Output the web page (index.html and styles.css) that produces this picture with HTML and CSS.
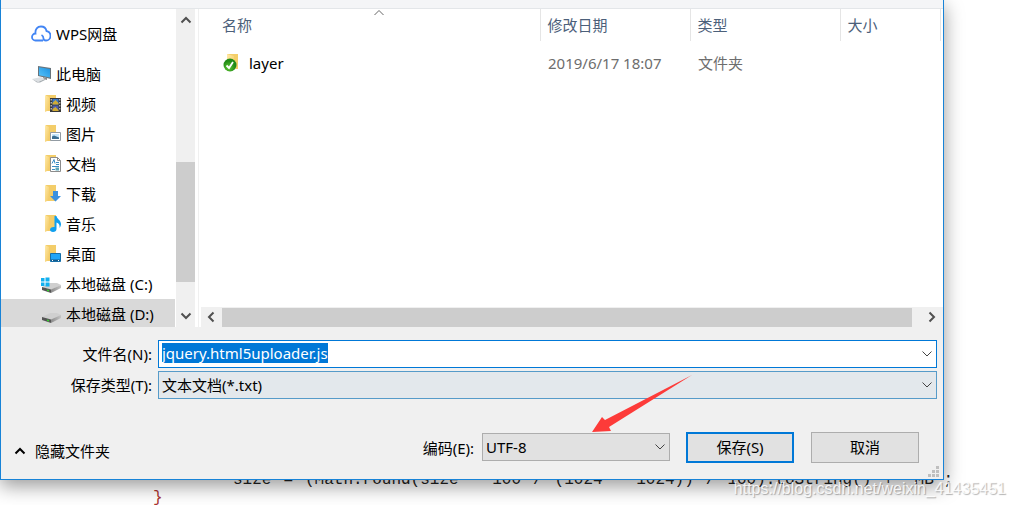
FILE: index.html
```
<!DOCTYPE html>
<html lang="zh-CN">
<head>
<meta charset="utf-8">
<title>另存为</title>
<link rel="stylesheet" href="styles.css">
</head>
<body>
<svg class="defs" aria-hidden="true">
  <defs>
    <linearGradient id="fold" x1="0" x2="1" y1="0" y2="1"><stop offset="0" stop-color="#ffeaa8"/><stop offset="1" stop-color="#f2c75f"/></linearGradient>
    <linearGradient id="metal" x1="0" x2="1"><stop offset="0" stop-color="#8b8b8b"/><stop offset="1" stop-color="#c4c4c4"/></linearGradient>
    <linearGradient id="screen" x1="0" x2="1" y1="1" y2="0"><stop offset="0" stop-color="#58c4fa"/><stop offset="1" stop-color="#1d91e0"/></linearGradient>
    <radialGradient id="ok" cx=".4" cy=".7"><stop offset="0" stop-color="#62c935"/><stop offset="1" stop-color="#218b16"/></radialGradient>
    <symbol id="folder" viewBox="0 0 20 20">
      <path d="M5 1h10v16H5z" fill="#f3cd69"/>
      <path d="M4 1l4 2v13l-4 2z" fill="url(#fold)"/>
    </symbol>
    <symbol id="drive" viewBox="0 0 20 20">
      <path d="M1 13l8-4h7l4 2-10 5z" fill="#cfcfcf"/>
      <path d="M10 15.500l10-4.500v3L10 19z" fill="url(#metal)"/>
      <path d="M1 13l9 2.500V19l-9-3z" fill="#555"/>
      <path d="M6 15.500l2 .5v1.500L6 17z" fill="#35d12f"/>
    </symbol>
    <symbol id="chevron" viewBox="0 0 12 8"><path d="M1.500 1.500L6 6l4.500-4.500" fill="none" stroke="currentColor"/></symbol>
    <symbol id="arrow" viewBox="0 0 12 8"><path d="M1.500 6.500L6 2l4.500 4.500" fill="none" stroke="currentColor" stroke-width="2"/></symbol>
  </defs>
</svg>
<main class="desktop">
  <form class="dialog" onsubmit="return false">
    <div class="toolbar"></div>
    <div class="panes">
      <nav class="tree">
        <a class="node root" href="#"><svg class="icon" viewBox="0 0 20 20"><path d="M12 16.500H4.500a3.500 3.500 0 0 1 0-7C4 5 6.500 2.500 10 2.500c3 0 5 2 5.500 4.500 2.500.5 4 2.500 4 4.700 0 2.800-2.200 4.800-4.500 4.800-2 0-2.500-1-2.500-2 0-1.200 0-2.500-2-3.500" fill="none" stroke="#4285f4" stroke-width="1.800"/></svg>WPS网盘</a>
        <a class="node root gap" href="#"><svg class="icon" viewBox="0 0 20 20"><path d="M7 2l13 2v11L7 12z" fill="#68737b"/><path d="M8 3.200l11 1.700v8.600L8 11.200z" fill="url(#screen)"/><path d="M12 13l4 1v2l-4-1z" fill="#888"/><path d="M1 15l9-2 4 2-7 3z" fill="#dce0e3"/><path d="M1 15l6 3 7-3v1l-5 2.500H6z" fill="#a3aaaf"/></svg>此电脑</a>
        <a class="node" href="#"><svg class="icon" viewBox="0 0 20 20"><use href="#folder"/><path d="M9 4h11v14H9z" fill="#383838"/><path d="M11.500 5h6v5.500h-6z" fill="#3a78c8"/><path d="M11.500 11.500h6V17h-6z" fill="#4c5fae"/><path d="M11.500 9l3-3 3 3v1.500h-6zM11.500 15l3-2 3 3v1h-6z" fill="#d2ac35"/><path d="M10.200 5v12M18.800 5v12" stroke="#e8e8e8" stroke-dasharray="1.500 1.500"/></svg>视频</a>
        <a class="node" href="#"><svg class="icon" viewBox="0 0 20 20"><use href="#folder"/><path d="M9.500 8.500h10v8h-10z" fill="#fff" stroke="#929ba3"/><path d="M11 10h7v5h-7z" fill="#c5e5fa"/><path d="M11 12.500l2-1 5 2V15h-7z" fill="#3b6e92"/></svg>图片</a>
        <a class="node" href="#"><svg class="icon" viewBox="0 0 20 20"><use href="#folder"/><path d="M9.500 3.500h7l3 3v11h-10z" fill="#fff" stroke="#8c8c8c"/><path d="M16.500 3.500v3h3" fill="none" stroke="#8c8c8c"/><path d="M11 9.500l2-4 1 4M15 8.500h3M15 10.500h3M11 12.500h7M11 15.500h3" fill="none" stroke="#3b8cc4"/><path d="M14.500 13.500H18v3h-3.500z" fill="#5ba4b6"/></svg>文档</a>
        <a class="node" href="#"><svg class="icon" viewBox="0 0 20 20"><use href="#folder"/><path d="M12 7h5v5h3l-5.500 5.500L9 12h3z" fill="#3b91df"/></svg>下载</a>
        <a class="node" href="#"><svg class="icon" viewBox="0 0 20 20"><use href="#folder"/><path d="M13.500 2h2c.3 3 4.500 4 4.500 8 0 1.500-.5 2.500-1.500 4 .5-3-.5-4.500-3-5.500V15c0 2-1.500 3-3.500 3s-3-1-3-2.500 2-3 4.500-2.500z" fill="#10a0ef"/></svg>音乐</a>
        <a class="node" href="#"><svg class="icon" viewBox="0 0 20 20"><use href="#folder"/><path d="M9.500 9.500h10v8h-10z" fill="#20a5f8" stroke="#176fa9"/><path d="M10 15.500h9v1.500h-9z" fill="#145b8c"/><path d="M11 16.500h1M17 16.500h1" stroke="#fff"/></svg>桌面</a>
        <a class="node" href="#"><svg class="icon" viewBox="0 0 20 20"><use href="#drive"/><path d="M0 4h3.500v3.500H0zM4.500 3.500h4v4h-4zM0 8.500h3.500V12H0zM4.500 8.500h4v4h-4z" fill="#12b0ef"/></svg>本地磁盘 (C:)</a>
        <a class="node current" href="#"><svg class="icon" viewBox="0 0 20 20"><use href="#drive"/></svg>本地磁盘 (D:)</a>
      </nav>
      <div class="vbar">
        <svg class="tip"><use href="#arrow"/></svg>
        <div class="vthumb"></div>
        <svg class="tip down"><use href="#arrow"/></svg>
      </div>
      <section class="list">
        <table class="files">
          <thead>
            <tr><th class="name">名称<svg class="sort"><path d="M1.500 6L6 1.500 10.500 6" fill="none" stroke="currentColor"/></svg></th><th class="wide">修改日期</th><th class="wide">类型</th><th class="size">大小</th><th class="end"></th></tr>
          </thead>
          <tbody>
            <tr><td class="name"><div class="entry"><svg class="icon" viewBox="0 0 20 20"><path d="M5 1h11v15H5z" fill="#f4ce68"/><path d="M5 1l7 2v13l-7 2z" fill="url(#fold)"/><circle cx="8" cy="12" r="6.500" fill="url(#ok)"/><path d="M4.500 12.500l2.500 2.500 4-6" fill="none" stroke="#fff" stroke-width="1.800"/></svg>layer</div></td><td>2019/6/17 18:07</td><td>文件夹</td><td></td><td></td></tr>
          </tbody>
        </table>
        <div class="hbar">
          <svg class="tip left"><use href="#arrow"/></svg>
          <div class="hthumb"></div>
          <svg class="tip right"><use href="#arrow"/></svg>
        </div>
      </section>
    </div>
    <div class="fields">
      <label for="filename">文件名(N):</label>
      <div class="combo"><input class="box filename" id="filename" type="text" value="jquery.html5uploader.js" spellcheck="false" autocomplete="off"><svg class="chevron"><use href="#chevron"/></svg></div>
      <label for="filetype">保存类型(T):</label>
      <div class="combo"><select class="box filetype" id="filetype"><option>文本文档(*.txt)</option></select><svg class="chevron"><use href="#chevron"/></svg></div>
    </div>
    <div class="footer">
      <button class="toggle" type="button"><svg class="tip"><use href="#arrow"/></svg>隐藏文件夹</button>
      <label class="enc-label" for="encoding">编码(E):</label>
      <div class="combo enc"><select class="box encoding" id="encoding"><option>UTF-8</option></select><svg class="chevron"><use href="#chevron"/></svg></div>
      <button class="button primary" type="submit">保存(S)</button>
      <button class="button" type="button">取消</button>
    </div>
    <svg class="grip" viewBox="0 0 12 12"><path d="M8 0h3v3H8zM4 4h3v3H4zM8 4h3v3H8zM0 8h3v3H0zM4 8h3v3H4zM8 8h3v3H8z" fill="#bfbfbf"/></svg>
    <svg class="pointer" viewBox="0 0 100 57"><path d="M0 57L10 42l3 3L100 0 17 52l2 4z" fill="#fd3b39"/></svg>
  </form>
  <div class="editor">
    <div class="code">size = (Math.round(size * 100 / (1024 * 1024)) / 100).toString() + 'MB';</div>
    <div class="brace">}</div>
  </div>
  <div class="watermark">https://blog.csdn.net/weixin_41435451</div>
</main>
<script src="main.js"></script>
</body>
</html>
```
FILE: styles.css
```
* { box-sizing: border-box; }
body {
  margin: 0;
  background: #fff;
  color: #000;
  font: 15px/20px "Noto Sans", "Noto Sans CJK SC", sans-serif;
  overflow: hidden;
}
input, select, button { font: inherit; color: inherit; }
svg { display: block; flex: none; }
.defs { position: absolute; width: 0; height: 0; }
.desktop { position: relative; min-height: 100vh; overflow: hidden; }

.dialog {
  position: relative;
  z-index: 1;
  margin-right: 70px;
  background: #f0f0f0;
  border: 1px solid #1883d7;
  border-top: 0;
  box-shadow: 0 6px 18px rgba(0, 0, 0, .4);
}
.toolbar { height: 9px; background: #f4f5f7; border-bottom: 1px solid #e3e6e9; }

.panes { display: flex; height: 318px; background: #fff; }
.tree { width: 175px; padding: 10px 1px 0 0; overflow: hidden; }
.node {
  display: flex;
  align-items: center;
  gap: 5px;
  height: 30px;
  padding-left: 40px;
  color: #000;
  text-decoration: none;
  white-space: nowrap;
}
.node.root { padding-left: 30px; }
.node.gap { margin-top: 10px; }
.node.current { background: #d9d9d9; }
.icon { width: 20px; height: 20px; }

.vbar {
  display: flex;
  flex-direction: column;
  align-items: center;
  width: 19px;
  padding: 7px 0;
  background: #f0f0f0;
  color: #505050;
}
.tip { width: 12px; height: 8px; }
.tip.down { transform: rotate(180deg); }
.tip.left { transform: rotate(-90deg); }
.tip.right { transform: rotate(90deg); }
.vthumb { width: 100%; height: 120px; margin: auto 0 30px; background: #cdcdcd; }

.list {
  display: flex;
  flex: 1;
  flex-direction: column;
  justify-content: space-between;
  margin-left: 3px;
  border-left: 1px solid #f0f0f0;
}
.files { width: 100%; border-collapse: collapse; table-layout: fixed; }
.files th {
  position: relative;
  height: 32px;
  padding: 0 0 0 7px;
  border-left: 1px solid #e5e5e5;
  color: #4c607a;
  font-weight: 400;
  text-align: left;
}
.files th.name { border-left: 0; padding-left: 23px; }
.files .wide { width: 150px; }
.files .size { width: 100px; }
.files .end { width: 3px; padding: 0; }
.files td { height: 37px; padding: 7px 0 0 8px; color: #6d6d6d; }
.files td.name { padding-left: 23px; color: #000; }
.entry { display: flex; align-items: center; gap: 7px; }
.sort { position: absolute; top: 0; left: 51%; width: 12px; height: 8px; color: #666; }
.hbar {
  display: flex;
  align-items: center;
  height: 20px;
  margin-left: 2px;
  padding: 0 5px 0 4px;
  background: #f0f0f0;
  color: #505050;
}
.hthumb { flex: 1; height: 19px; margin: 0 14px 0 5px; background: #cdcdcd; }

.fields {
  display: grid;
  grid-template-columns: 151px 1fr;
  gap: 3px 6px;
  align-items: center;
  padding: 13px 6px 0 0;
}
.fields label { text-align: right; }
.combo { display: grid; align-items: center; }
.combo > * { grid-area: 1 / 1; }
.chevron { justify-self: end; width: 12px; height: 8px; margin-right: 4px; color: #444; pointer-events: none; }
.box {
  appearance: none;
  width: 100%;
  height: 28px;
  padding: 0 20px 0 3px;
  border: 1px solid #adadad;
  border-radius: 0;
  outline: 0;
  background: #e1e1e1;
}
.filename { padding-bottom: 2px; border-color: #0078d7; background: #fff; }
.filename::selection { background: #0078d7; color: #fff; }
.filetype { border-color: #569bc9; background: #e3e8ec; }

.footer { display: flex; align-items: center; padding: 33px 24px 16px 13px; }
.toggle {
  display: flex;
  align-items: center;
  gap: 9px;
  margin-right: auto;
  padding: 7px 0 0;
  border: 0;
  background: none;
  color: #000;
}
.enc-label { margin-right: 8px; }
.enc { width: 188px; margin-right: 16px; padding-bottom: 2px; }
.button { width: 108px; height: 31px; padding: 0 0 2px; border: 1px solid #adadad; background: #e1e1e1; }
.button.primary { margin-right: 17px; border: 2px solid #0078d7; }
.grip { position: absolute; right: 3px; bottom: 1px; width: 12px; height: 12px; }
.pointer { position: absolute; right: 251px; bottom: 47px; width: 100px; height: 57px; pointer-events: none; }

.editor {
  margin: -9px 61px 0 153px;
  font: 16px/18px "Liberation Mono", monospace;
  color: #222;
}
.code { padding-left: 80px; text-align-last: justify; white-space: nowrap; }
.brace { color: #a33; }
.watermark {
  position: absolute;
  z-index: 2;
  right: 8px;
  bottom: 8px;
  color: rgba(255, 255, 255, .85);
  font: 16px/20px "Liberation Sans", sans-serif;
  text-shadow: 1px 1px 1px rgba(0, 0, 0, .3);
}
```
FILE: main.js
```
const filename = document.getElementById("filename");
filename.focus();
filename.select();
```
